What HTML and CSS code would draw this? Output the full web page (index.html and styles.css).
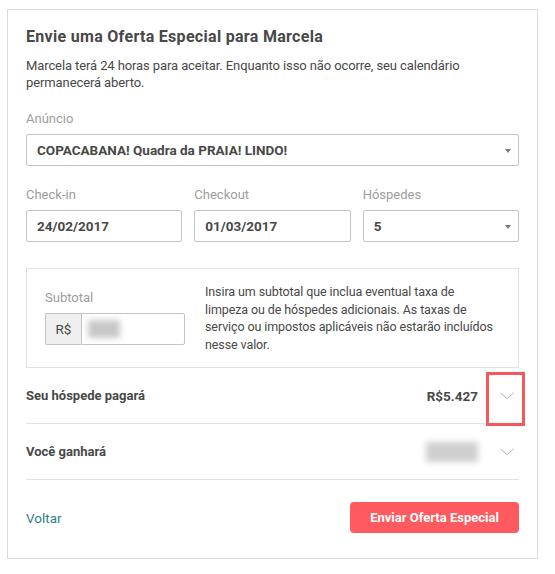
FILE: index.html
```html
<!DOCTYPE html>
<html lang="pt-BR">
<head>
<meta charset="utf-8">
<title>Oferta Especial</title>
<link rel="stylesheet" href="styles.css">
</head>
<body>
<div class="card">
  <h1 class="title">Envie uma Oferta Especial para Marcela</h1>
  <p class="intro">Marcela terá 24 horas para aceitar. Enquanto isso não ocorre, seu calendário permanecerá aberto.</p>

  <div class="field">
    <div class="label">Anúncio</div>
    <div class="control select">COPACABANA! Quadra da PRAIA! LINDO!<span class="caret"></span></div>
  </div>

  <div class="triple">
    <div class="field">
      <div class="label">Check-in</div>
      <div class="control">24/02/2017</div>
    </div>
    <div class="field">
      <div class="label">Checkout</div>
      <div class="control">01/03/2017</div>
    </div>
    <div class="field">
      <div class="label">Hóspedes</div>
      <div class="control select">5<span class="caret"></span></div>
    </div>
  </div>

  <div class="subtotal">
    <div class="sub-left">
      <div class="label">Subtotal</div>
      <div class="group">
        <div class="addon">R$</div>
        <div class="group-input"><span class="blur blur-sub"></span></div>
      </div>
    </div>
    <p class="help">Insira um subtotal que inclua eventual taxa de<br>limpeza ou de hóspedes adicionais. As taxas de<br>serviço ou impostos aplicáveis não estarão incluídos<br>nesse valor.</p>
  </div>

  <div class="row">
    <div class="row-label">Seu hóspede pagará</div>
    <div class="row-value">R$5.427</div>
    <div class="chev">
      <svg width="14" height="8" viewBox="0 0 14 8"><path d="M0.5 0.8 L7 6.8 L13.5 0.8" fill="none" stroke="#b4b4b4" stroke-width="1"/></svg>
      <span class="highlight"></span>
    </div>
  </div>
  <div class="row">
    <div class="row-label">Você ganhará</div>
    <div class="row-value"><span class="blur blur-val"></span></div>
    <div class="chev">
      <svg width="14" height="8" viewBox="0 0 14 8"><path d="M0.5 0.8 L7 6.8 L13.5 0.8" fill="none" stroke="#b4b4b4" stroke-width="1"/></svg>
    </div>
  </div>

  <div class="footer">
    <a class="back" href="#">Voltar</a>
    <button class="send" type="button">Enviar Oferta Especial</button>
  </div>
</div>
</body>
</html>
```

FILE: styles.css
```css
* { box-sizing: border-box; }
html, body { margin: 0; padding: 0; background: #fff; }
body {
  font-family: "Roboto", "Liberation Sans", sans-serif;
  color: #484848;
  font-size: 13px;
}
.card {
  position: relative;
  margin: 9px 0 0 7px;
  width: 531px;
  height: 550px;
  border: 1px solid #dcdcdc;
  padding: 17px 18px 0 18px;
}
.title {
  margin: 0;
  font-size: 16px;
  letter-spacing: 0.3px;
  line-height: 20px;
  font-weight: 700;
  color: #484848;
}
.intro {
  margin: 11px 0 0 0;
  font-size: 13px;
  letter-spacing: -0.1px;
  line-height: 16.5px;
}
.field { display: flex; flex-direction: column; }
.card > .field { margin-top: 19px; }
.label {
  font-size: 13px;
  line-height: 18px;
  color: #9d9d9d;
  margin-bottom: 6px;
}
.control {
  position: relative;
  height: 32px;
  border: 1px solid #c4c4c4;
  border-radius: 2px;
  padding: 0 10px;
  display: flex;
  align-items: center;
  font-weight: 700;
  font-size: 13.5px;
  color: #484848;
}
.caret {
  position: absolute;
  right: 7px;
  top: 14px;
  width: 0;
  height: 0;
  border-left: 3.5px solid transparent;
  border-right: 3.5px solid transparent;
  border-top: 4px solid #7a7a7a;
}
.triple {
  margin-top: 20px;
  display: grid;
  grid-template-columns: 1fr 1fr 1fr;
  column-gap: 12px;
}
.subtotal {
  margin-top: 26px;
  height: 100px;
  border: 1px solid #e2e2e2;
  display: flex;
  align-items: center;
  padding: 0 4px 0 18px;
  gap: 20px;
}
.sub-left { width: 140px; flex: none; margin-top: -2px; }
.group { display: flex; height: 32px; }
.addon {
  width: 36px;
  border: 1px solid #c4c4c4;
  border-right: none;
  background: #efefef;
  border-radius: 2px 0 0 2px;
  display: flex;
  align-items: center;
  justify-content: center;
  font-size: 13.5px;
  color: #484848;
}
.group-input {
  flex: 1;
  border: 1px solid #c4c4c4;
  border-radius: 0 2px 2px 0;
  display: flex;
  align-items: center;
  padding-left: 6px;
}
.blur {
  display: block;
  background: #c8c8c8;
  filter: blur(3px);
}
.blur-sub { width: 32px; height: 18px; }
.help {
  margin: 0;
  flex: 1;
  white-space: nowrap;
  font-size: 12.5px;
  letter-spacing: -0.1px;
  line-height: 17.5px;
  color: #484848;
}
.row {
  height: 56px;
  border-bottom: 1px solid #e2e2e2;
  display: flex;
  align-items: center;
}
.row-label { flex: 1; font-weight: 700; font-size: 13px; }
.row-value { font-weight: 700; font-size: 13.5px; }
.blur-val { width: 52px; height: 20px; background: #cfcfcf; }
.chev {
  position: relative;
  width: 24px;
  margin-left: 17px;
  height: 8px;
  display: flex;
  justify-content: center;
}
.chev svg { display: block; }
.highlight {
  position: absolute;
  left: -9px;
  top: -20px;
  width: 39px;
  height: 54px;
  border: 3px solid #f4575c;
}
.footer {
  margin-top: 22px;
  display: flex;
  justify-content: space-between;
  align-items: center;
}
.back {
  color: #2f7e88;
  text-decoration: none;
  font-size: 13.5px;
}
.send {
  width: 169px;
  height: 31px;
  border: none;
  border-radius: 4px;
  background: #ff5a5f;
  color: #fff;
  font-family: "Roboto", "Liberation Sans", sans-serif;
  font-weight: 700;
  font-size: 13px;
}
```
